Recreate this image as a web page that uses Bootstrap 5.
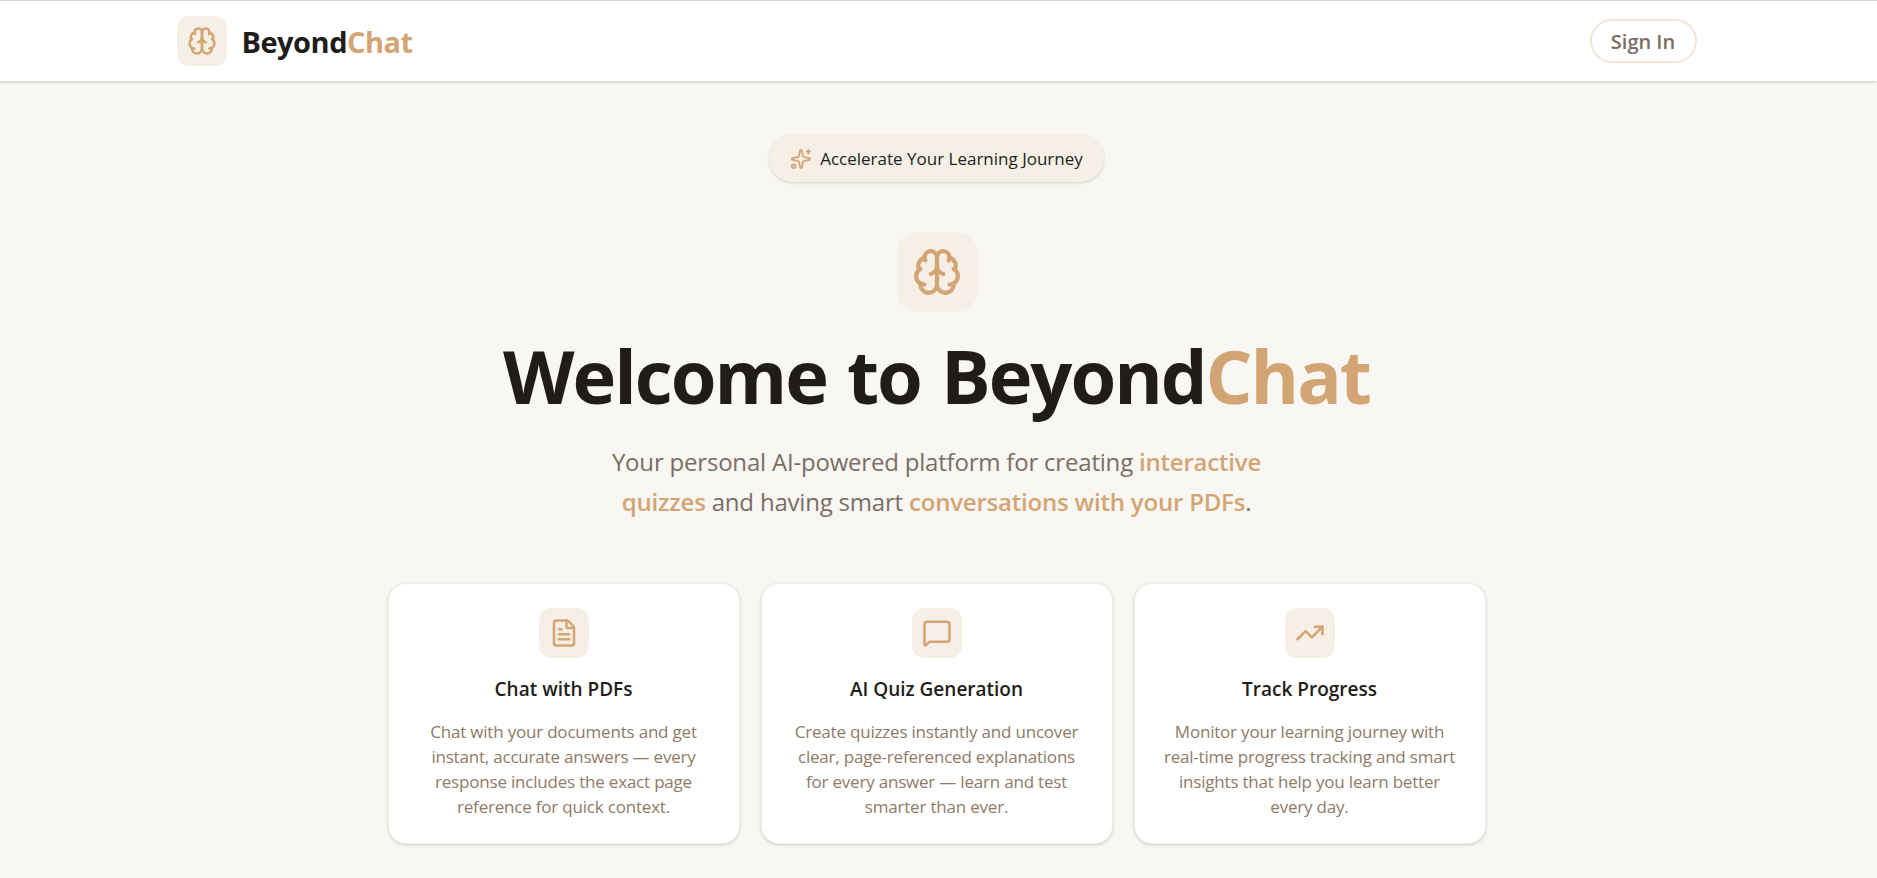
<!DOCTYPE html>
<html lang="en">
<head>
  <meta charset="UTF-8" />
  <meta name="viewport" content="width=device-width, initial-scale=1.0"/>
  <title>BeyondChat</title>
  <link href="https://cdn.jsdelivr.net/npm/bootstrap@5.3.3/dist/css/bootstrap.min.css" rel="stylesheet">
  <style>
    body {
      background-color: #f8f7f3;
      color: #1f1c19;
      font-family: "Open Sans", "Liberation Sans", sans-serif;
      height: 878px;
      overflow: hidden;
      border-top: 1px solid #d6d2cd;
    }
    .top-bar {
      background-color: #fff;
      height: 80px;
      padding: 0 4px 0 0;
      box-shadow: 0 1px 3px rgba(60, 50, 40, 0.26);
    }
    .top-inner {
      width: 1520px;
      margin: 0 auto;
    }
    .page-main { padding-right: 4px; }
    .icon-tile {
      background-color: #f5efe6;
      color: #d4a574;
      flex-shrink: 0;
    }
    .icon-tile svg {
      fill: none;
      stroke: currentColor;
      stroke-width: 2;
      stroke-linecap: round;
      stroke-linejoin: round;
    }
    .tile-sm { width: 50px; height: 50px; border-radius: 12px; }
    .tile-lg { width: 80px; height: 80px; border-radius: 20px; }
    .brand-name {
      gap: 15px;
      font-size: 29px;
      font-weight: 700;
      letter-spacing: -0.5px;
      color: #1f1c19;
      text-decoration: none;
    }
    .brand-text { padding-top: 2px; }
    .accent { color: #d4a574; }
    .sign-in {
      width: 107px;
      height: 44px;
      padding: 2px 0 0;
      border: 2px solid #f0e6d8;
      border-radius: 22px;
      background: #fff;
      color: #7a6e64;
      font-size: 20px;
      font-weight: 600;
    }
    .hero-pill {
      background-color: #f5efe6;
      height: 47px;
      padding: 0 21px;
      border-radius: 24px;
      font-size: 17px;
      font-weight: 500;
      color: #221f1c;
      box-shadow: 0 1px 3px rgba(60, 50, 40, 0.2);
      margin-top: 54px;
      margin-bottom: 50px;
    }
    .hero-title {
      font-size: 74px;
      font-weight: 700;
      line-height: 1;
      color: #1f1c19;
      letter-spacing: -2.05px;
      word-spacing: 3px;
      margin: 27px 0 29px;
    }
    .hero-sub {
      width: 720px;
      font-size: 24px;
      line-height: 40px;
      font-weight: 400;
      letter-spacing: -0.2px;
      color: #7a6e64;
      margin-bottom: 61px;
    }
    .hero-sub strong { font-weight: 600; color: #d4a574; }
    .feature-grid {
      display: grid;
      grid-template-columns: repeat(3, 352px);
      column-gap: 21px;
    }
    .feature-card {
      height: 261px;
      padding: 24px 28px 0;
      border: 1px solid #f1ede8;
      border-radius: 18px;
      box-shadow: 0 1px 3px rgba(60, 50, 40, 0.22);
    }
    .feature-title {
      font-size: 19px;
      font-weight: 600;
      color: #1f1c19;
      margin: 18px 0 16px;
      line-height: 27px;
    }
    .feature-text {
      font-size: 17px;
      font-weight: 400;
      letter-spacing: -0.2px;
      line-height: 25px;
      color: #8f7a68;
      margin: 0;
    }
  </style>
</head>
<body>

  <nav class="navbar top-bar">
    <div class="top-inner d-flex justify-content-between align-items-center">
      <a class="d-flex align-items-center brand-name" href="#">
        <span class="icon-tile tile-sm d-flex align-items-center justify-content-center">
          <svg width="30" height="30" viewBox="0 0 24 24"><path d="M12 5a3 3 0 1 0-5.997.125 4 4 0 0 0-2.526 5.77 4 4 0 0 0 .556 6.588A4 4 0 1 0 12 18Z"/><path d="M12 5a3 3 0 1 1 5.997.125 4 4 0 0 1 2.526 5.77 4 4 0 0 1-.556 6.588A4 4 0 1 1 12 18Z"/><path d="M15 13a4.5 4.5 0 0 1-3-4 4.5 4.5 0 0 1-3 4"/><path d="M17.599 6.5a3 3 0 0 0 .399-1.375"/><path d="M6.003 5.125A3 3 0 0 0 6.401 6.5"/><path d="M3.477 10.896a4 4 0 0 1 .585-.396"/><path d="M19.938 10.5a4 4 0 0 1 .585.396"/><path d="M6 18a4 4 0 0 1-1.967-.516"/><path d="M19.967 17.484A4 4 0 0 1 18 18"/></svg>
        </span>
        <span class="brand-text">Beyond<span class="accent">Chat</span></span>
      </a>
      <button class="btn sign-in" type="button">Sign In</button>
    </div>
  </nav>

  <main class="page-main d-flex flex-column align-items-center text-center">
    <div class="hero-pill d-inline-flex align-items-center gap-2">
      <svg class="accent" width="22" height="22" viewBox="0 0 24 24" fill="none" stroke="currentColor" stroke-width="2" stroke-linecap="round" stroke-linejoin="round"><path d="M11.017 2.814a1 1 0 0 1 1.966 0l1.051 5.558a2 2 0 0 0 1.594 1.594l5.558 1.051a1 1 0 0 1 0 1.966l-5.558 1.051a2 2 0 0 0-1.594 1.594l-1.051 5.558a1 1 0 0 1-1.966 0l-1.051-5.558a2 2 0 0 0-1.594-1.594l-5.558-1.051a1 1 0 0 1 0-1.966l5.558-1.051a2 2 0 0 0 1.594-1.594z"/><path d="M20 2v4"/><path d="M22 4h-4"/><circle cx="4" cy="20" r="2"/></svg>
      <span>Accelerate Your Learning Journey</span>
    </div>

    <div class="icon-tile tile-lg d-flex align-items-center justify-content-center">
      <svg width="50" height="50" viewBox="0 0 24 24"><path d="M12 5a3 3 0 1 0-5.997.125 4 4 0 0 0-2.526 5.77 4 4 0 0 0 .556 6.588A4 4 0 1 0 12 18Z"/><path d="M12 5a3 3 0 1 1 5.997.125 4 4 0 0 1 2.526 5.77 4 4 0 0 1-.556 6.588A4 4 0 1 1 12 18Z"/><path d="M15 13a4.5 4.5 0 0 1-3-4 4.5 4.5 0 0 1-3 4"/><path d="M17.599 6.5a3 3 0 0 0 .399-1.375"/><path d="M6.003 5.125A3 3 0 0 0 6.401 6.5"/><path d="M3.477 10.896a4 4 0 0 1 .585-.396"/><path d="M19.938 10.5a4 4 0 0 1 .585.396"/><path d="M6 18a4 4 0 0 1-1.967-.516"/><path d="M19.967 17.484A4 4 0 0 1 18 18"/></svg>
    </div>

    <h1 class="hero-title">Welcome to Beyond<span class="accent">Chat</span></h1>

    <p class="hero-sub">Your personal AI-powered platform for creating <strong>interactive quizzes</strong> and having smart <strong>conversations with your PDFs</strong>.</p>

    <div class="feature-grid">
      <div class="card feature-card align-items-center">
        <div class="icon-tile tile-sm d-flex align-items-center justify-content-center">
          <svg width="30" height="30" viewBox="0 0 24 24"><path d="M6 22a2 2 0 0 1-2-2V4a2 2 0 0 1 2-2h8a2.4 2.4 0 0 1 1.704.706l3.588 3.588A2.4 2.4 0 0 1 20 8v12a2 2 0 0 1-2 2z"/><path d="M14 2v5a1 1 0 0 0 1 1h5"/><path d="M10 9H8"/><path d="M16 13H8"/><path d="M16 17H8"/></svg>
        </div>
        <h3 class="feature-title">Chat with PDFs</h3>
        <p class="feature-text">Chat with your documents and get instant, accurate answers — every response includes the exact page reference for quick context.</p>
      </div>
      <div class="card feature-card align-items-center">
        <div class="icon-tile tile-sm d-flex align-items-center justify-content-center">
          <svg width="30" height="30" viewBox="0 0 24 24"><path d="M22 17a2 2 0 0 1-2 2H6.828a2 2 0 0 0-1.414.586l-2.202 2.202A.71.71 0 0 1 2 21.286V5a2 2 0 0 1 2-2h16a2 2 0 0 1 2 2z"/></svg>
        </div>
        <h3 class="feature-title">AI Quiz Generation</h3>
        <p class="feature-text">Create quizzes instantly and uncover clear, page-referenced explanations for every answer — learn and test smarter than ever.</p>
      </div>
      <div class="card feature-card align-items-center">
        <div class="icon-tile tile-sm d-flex align-items-center justify-content-center">
          <svg width="30" height="30" viewBox="0 0 24 24"><path d="M16 7h6v6"/><path d="m22 7-8.5 8.5-5-5L2 17"/></svg>
        </div>
        <h3 class="feature-title">Track Progress</h3>
        <p class="feature-text">Monitor your learning journey with real-time progress tracking and smart insights that help you learn better every day.</p>
      </div>
    </div>
  </main>

  <script src="https://cdn.jsdelivr.net/npm/bootstrap@5.3.3/dist/js/bootstrap.bundle.min.js"></script>
</body>
</html>
